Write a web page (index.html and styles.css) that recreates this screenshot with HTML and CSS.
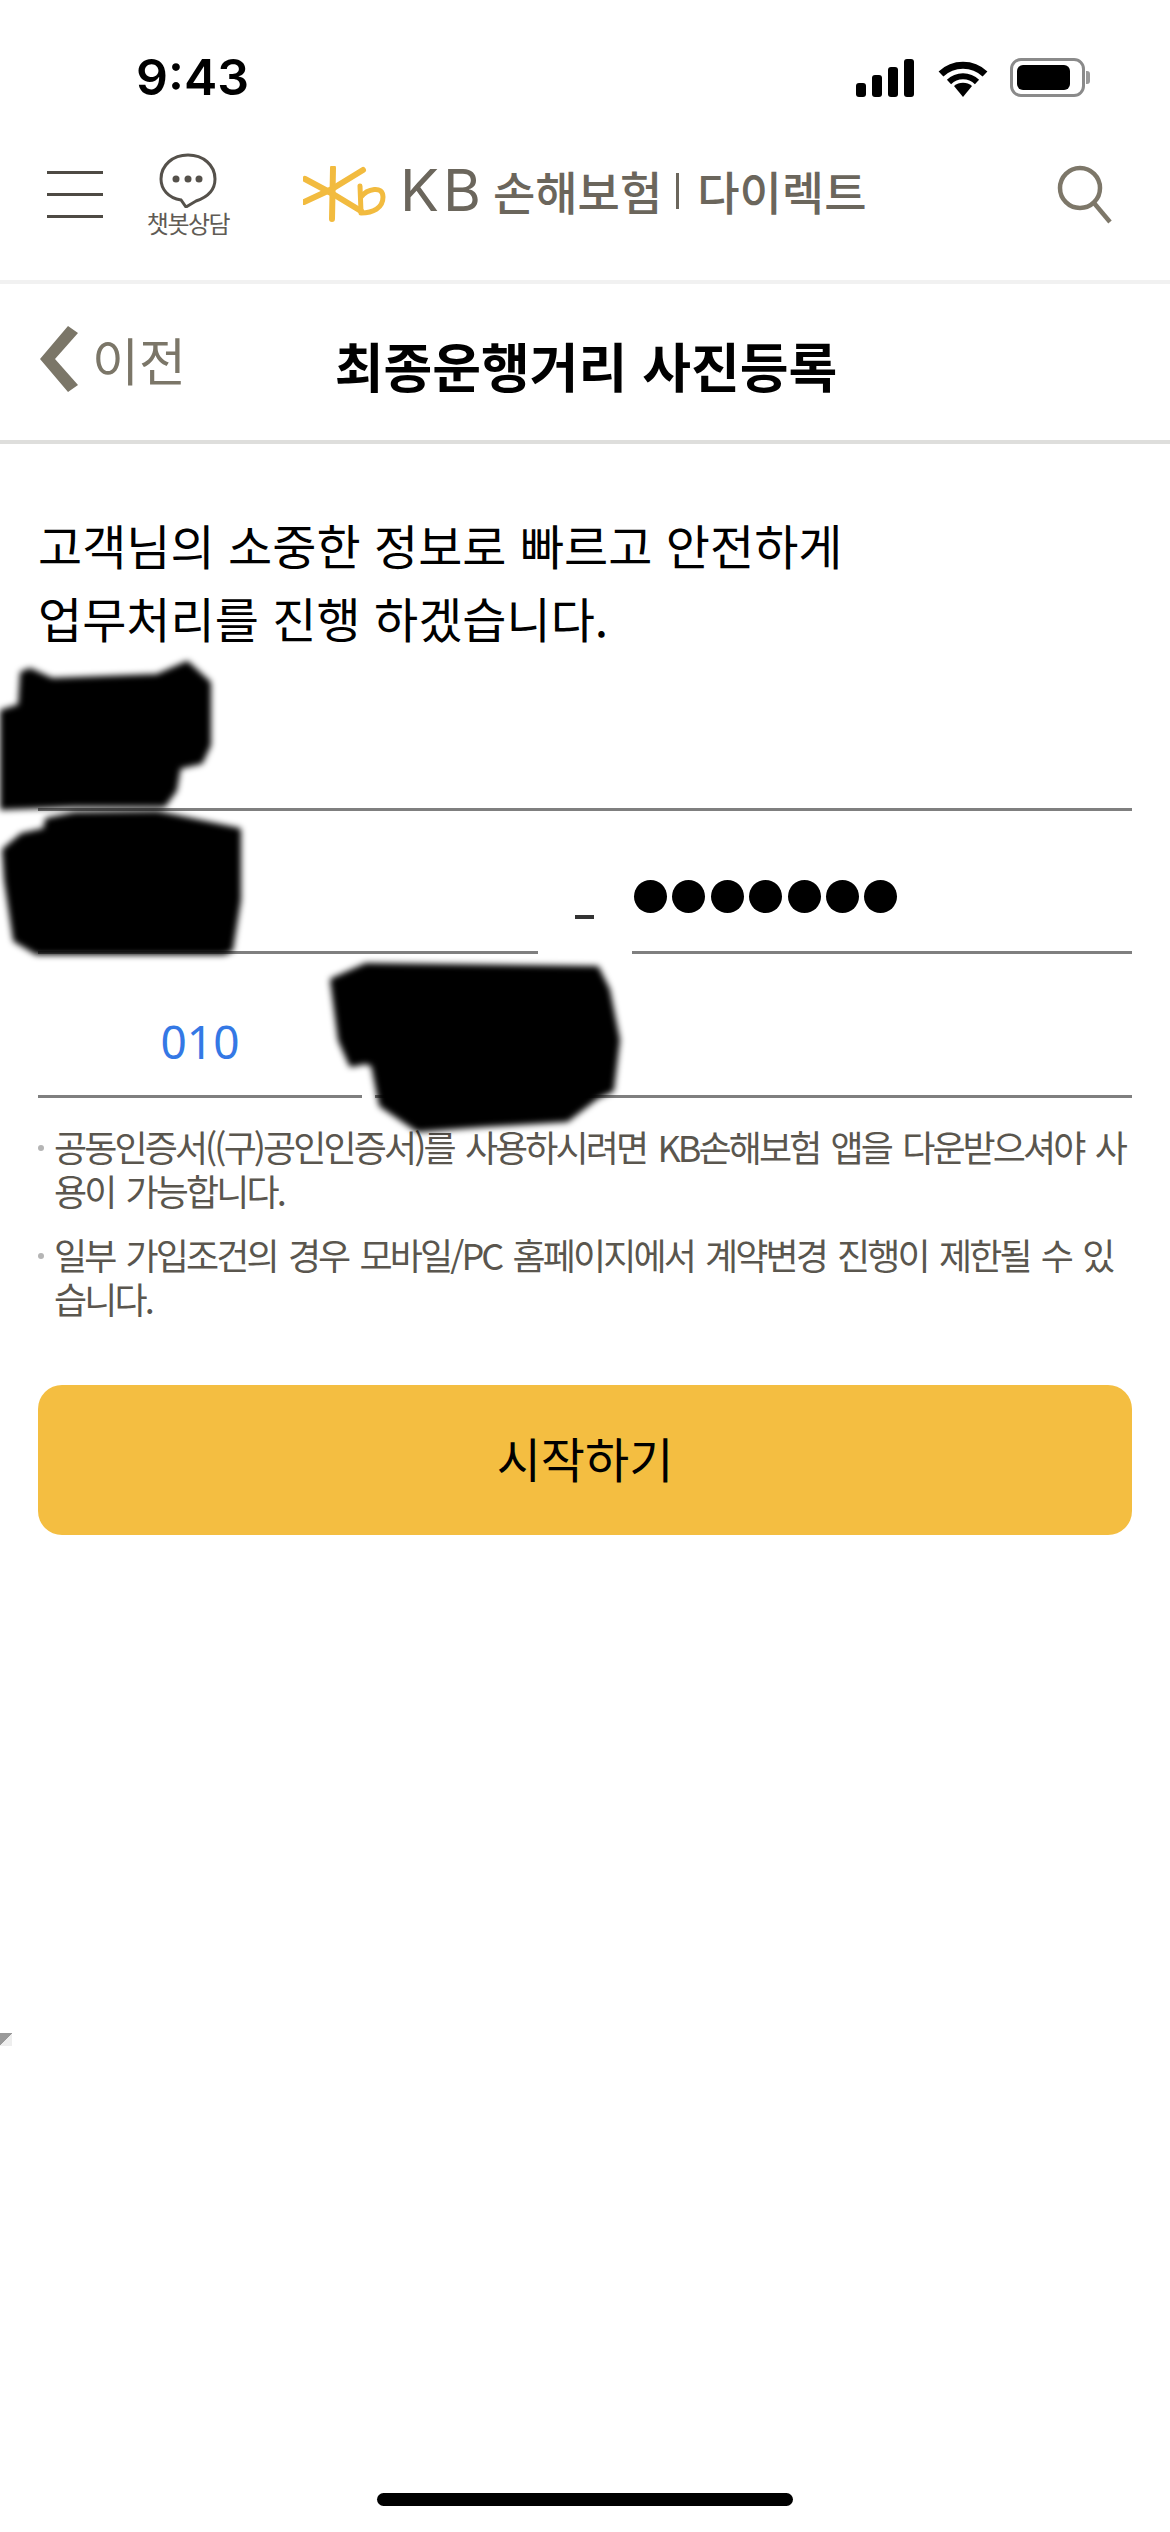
FILE: index.html
```html
<!DOCTYPE html>
<html lang="ko">
<head>
<meta charset="utf-8">
<meta name="viewport" content="width=device-width, initial-scale=1">
<title>최종운행거리 사진등록</title>
<link rel="stylesheet" href="styles.css">
</head>
<body>
<div class="app">

  <div class="status">
    <span class="time">9:43</span>
    <div class="status-icons">
      <svg class="signal" width="58" height="38" viewBox="0 0 58 38">
        <rect x="0" y="24" width="10" height="14" rx="3"/>
        <rect x="16" y="16" width="10" height="22" rx="3"/>
        <rect x="32" y="8" width="10" height="30" rx="3"/>
        <rect x="48" y="0" width="10" height="38" rx="3"/>
      </svg>
      <svg class="wifi" width="50" height="38" viewBox="0 0 50 38">
        <path d="M25 38 L16 27 A14 14 0 0 1 34 27 Z"/>
        <path d="M3 15 A32 32 0 0 1 47 15" fill="none" stroke="#000" stroke-width="7"/>
        <path d="M11 23 A20 20 0 0 1 39 23" fill="none" stroke="#000" stroke-width="6"/>
      </svg>
      <div class="battery"><div class="battery-fill"></div></div>
      <div class="battery-nub"></div>
    </div>
  </div>

  <div class="topnav">
    <div class="menu-btn"><span></span><span></span><span></span></div>
    <div class="chat">
      <svg width="60" height="56" viewBox="0 0 60 56">
        <path d="M23 48 C10 46 3 37 3 27 C3 13 15 3 30 3 C45 3 57 13 57 27 C57 40 47 46 38 49 L28 55 Z" fill="none" stroke="#55514b" stroke-width="3"/>
        <circle cx="18" cy="27" r="3.5" fill="#55514b"/>
        <circle cx="30" cy="27" r="3.5" fill="#55514b"/>
        <circle cx="41" cy="27" r="3.5" fill="#55514b"/>
      </svg>
      <span class="chat-label">챗봇상담</span>
    </div>
    <div class="logo">
      <svg class="logo-mark" width="84" height="58" viewBox="0 0 84 58" fill="none" stroke="#f2bb3f" stroke-linecap="round" stroke-linejoin="round">
        <path d="M30 2 L29 53" stroke-width="6"/>
        <path d="M2 13 L30 28 L58 45" stroke-width="6"/>
        <path d="M1 36 L29 23 L60 4" stroke-width="6"/>
        <path d="M57 20 L58 46" stroke-width="5"/>
        <path d="M58 31 C64 23 80 19 80 31 C80 42 70 47 58 47" stroke-width="5"/>
      </svg>
      <span class="logo-kb">KB</span>
      <span class="logo-name">손해보험</span>
      <span class="logo-bar"></span>
      <span class="logo-name">다이렉트</span>
    </div>
    <svg class="search" width="60" height="60" viewBox="0 0 60 60" fill="none" stroke="#7d7769" stroke-width="4.5">
      <circle cx="24" cy="24" r="20"/>
      <path d="M38 39 L54 58"/>
    </svg>
  </div>

  <div class="titlebar">
    <div class="back">
      <svg width="38" height="66" viewBox="0 0 38 66"><path d="M28 0 L38 7 L15 33 L38 59 L28 66 L0 33 Z" fill="#7b7668"/></svg>
      <span>이전</span>
    </div>
    <h1>최종운행거리 사진등록</h1>
    <div></div>
  </div>

  <div class="content">
    <p class="intro">고객님의 소중한 정보로 빠르고 안전하게<br>업무처리를 진행 하겠습니다.</p>

    <div class="field field-name"></div>

    <div class="row row-id">
      <div class="field field-grow"></div>
      <span class="dash"></span>
      <div class="field field-grow dots">
        <i></i><i></i><i></i><i></i><i></i><i></i><i></i>
      </div>
    </div>

    <div class="row row-phone">
      <div class="field field-prefix">010</div>
      <div class="field field-fill"></div>
    </div>

    <ul class="notes">
      <li>공동인증서((구)공인인증서)를 사용하시려면 KB손해보험 앱을 다운받으셔야 사용이 가능합니다.</li>
      <li>일부 가입조건의 경우 모바일/PC 홈페이지에서 계약변경 진행이 제한될 수 있습니다.</li>
    </ul>

    <button class="start-btn">시작하기</button>
  </div>

  <div class="home-bar"></div>

  <!-- black marker over personal data -->
  <svg class="redact" width="640" height="500" viewBox="0 650 640 500">
    <path d="M0 712 L20 706 L22 673 L30 670 L52 680 L157 676 L187 663 L209 683 L209 745 L201 762 L179 767 L175 790 L164 805 L75 805 L0 808 Z"/>
    <path d="M45 830 L47 820 L75 814 L157 813 L239 830 L239 900 L231 950 L224 953 L37 953 L15 940 L6 880 L4 850 L22 835 Z"/>
    <path d="M332 980 L366 965 L597 968 L608 990 L618 1040 L612 1090 L597 1097 L567 1120 L485 1125 L418 1130 L381 1105 L373 1065 L366 1062 L351 1065 L340 1040 Z"/>
  </svg>
  <div class="corner-mark"></div>
</div>
</body>
</html>
```

FILE: styles.css
```css
* {
  box-sizing: border-box;
}

body {
  margin: 0;
  background: #fff;
  font-family: "Noto Sans CJK KR", "Noto Sans", sans-serif;
  color: #000;
}

.app {
  position: relative;
  width: 1170px;
  height: 2532px;
  display: flex;
  flex-direction: column;
  overflow: hidden;
}

/* status bar */
.status {
  height: 130px;
  padding: 50px 80px 0 136px;
  display: flex;
  justify-content: space-between;
  align-items: flex-start;
}

.time {
  font-family: Inter, "Liberation Sans", sans-serif;
  font-weight: 600;
  font-size: 50px;
  line-height: 54px;
}

.status-icons {
  display: flex;
  align-items: center;
  padding-top: 8px;
}

.wifi {
  margin-left: 24px;
}

.battery {
  margin-left: 22px;
  width: 75px;
  height: 39px;
  border: 3px solid #8a8a8a;
  border-radius: 11px;
  padding: 4px;
}

.battery-fill {
  width: 53px;
  height: 100%;
  background: #000;
  border-radius: 6px;
}

.battery-nub {
  width: 4px;
  height: 13px;
  margin-left: 1px;
  background: #999;
  border-radius: 0 3px 3px 0;
}

/* top nav */
.topnav {
  height: 154px;
  padding: 22px 54px 0 47px;
  display: flex;
  align-items: flex-start;
  border-bottom: 4px solid #f1f1f1;
}

.menu-btn {
  width: 56px;
  padding-top: 19px;
  display: flex;
  flex-direction: column;
  gap: 19px;
}

.menu-btn span {
  height: 3px;
  background: #4e4a44;
}

.chat {
  width: 90px;
  margin-left: 40px;
  display: flex;
  flex-direction: column;
  align-items: center;
}

.chat-label {
  font-size: 24px;
  line-height: 30px;
  letter-spacing: -1.5px;
  color: #5f5b55;
  white-space: nowrap;
}

.logo {
  margin-left: 70px;
  padding-top: 9px;
  display: flex;
  align-items: flex-start;
  color: #6b665c;
}

.logo-mark {
  margin-top: 5px;
}

.logo-kb {
  margin-left: 13px;
  font-family: Inter, "Liberation Sans", sans-serif;
  font-size: 58px;
  line-height: 58px;
  letter-spacing: 4px;
}

.logo-name {
  margin-left: 8px;
  font-size: 46px;
  line-height: 58px;
  font-weight: 500;
}

.logo-bar {
  width: 3px;
  height: 36px;
  margin: 12px 10px 0 14px;
  background: #6b665c;
}

.search {
  margin-left: auto;
  margin-top: 12px;
}

/* title bar */
.titlebar {
  height: 160px;
  padding: 0 38px 0 40px;
  display: grid;
  grid-template-columns: 1fr auto 1fr;
  align-items: center;
  border-bottom: 4px solid #dededc;
}

.back {
  display: flex;
  align-items: center;
  gap: 14px;
  color: #7b7668;
  font-size: 51px;
  line-height: 60px;
  margin-top: -6px;
}

.titlebar h1 {
  margin: 6px 0 0;
  font-size: 53px;
  line-height: 60px;
  font-weight: 700;
}

/* form */
.content {
  padding: 0 38px;
}

.intro {
  margin: 64px 0 0;
  font-size: 48px;
  line-height: 73px;
  letter-spacing: 0;
}

.field {
  height: 100%;
  border-bottom: 3px solid #7f7f7f;
}

.field-name {
  height: 157px;
}

.row {
  display: flex;
  align-items: stretch;
}

.row-id {
  height: 143px;
}

.row-phone {
  height: 144px;
  gap: 13px;
}

.field-grow {
  width: 500px;
}

.dash {
  width: 19px;
  height: 4px;
  margin: 104px 38px 0 37px;
  background: #333;
}

.dots {
  display: flex;
  align-items: flex-end;
  gap: 5.4px;
  padding: 0 0 38px 2px;
}

.dots i {
  width: 33px;
  height: 33px;
  background: #000;
  border-radius: 50%;
}

.field-prefix {
  width: 324px;
  text-align: center;
  padding-top: 57px;
  font-family: "Noto Sans", sans-serif;
  font-size: 46px;
  line-height: 60px;
  color: #3478e5;
}

.field-fill {
  flex: 1;
}

.notes {
  list-style: none;
  margin: 26px 0 0;
  padding: 0;
  font-size: 36px;
  line-height: 44px;
  letter-spacing: -2.9px;
  word-spacing: 4px;
  color: #5a564e;
  word-break: break-all;
}

.notes li {
  position: relative;
  padding-left: 16px;
  margin-bottom: 20px;
}

.notes li::before {
  content: "";
  position: absolute;
  left: 0;
  top: 21px;
  width: 6px;
  height: 6px;
  border-radius: 50%;
  background: #b5b5b5;
}

.start-btn {
  display: block;
  width: 100%;
  height: 150px;
  margin-top: 65px;
  padding: 0 0 6px;
  border: 0;
  border-radius: 24px;
  background: #f4be41;
  font-family: inherit;
  font-size: 48px;
  color: #000;
}

.home-bar {
  width: 416px;
  height: 13px;
  margin: auto auto 26px;
  background: #000;
  border-radius: 7px;
}

/* overlays */
.redact {
  position: absolute;
  left: 0;
  top: 650px;
  filter: blur(3px);
}

.redact path {
  stroke: #000;
  stroke-width: 4;
  stroke-linejoin: round;
}

.corner-mark {
  position: absolute;
  left: 0;
  top: 2033px;
  width: 12px;
  height: 13px;
  background: linear-gradient(135deg, #999 50%, #eee 50%);
}
```
